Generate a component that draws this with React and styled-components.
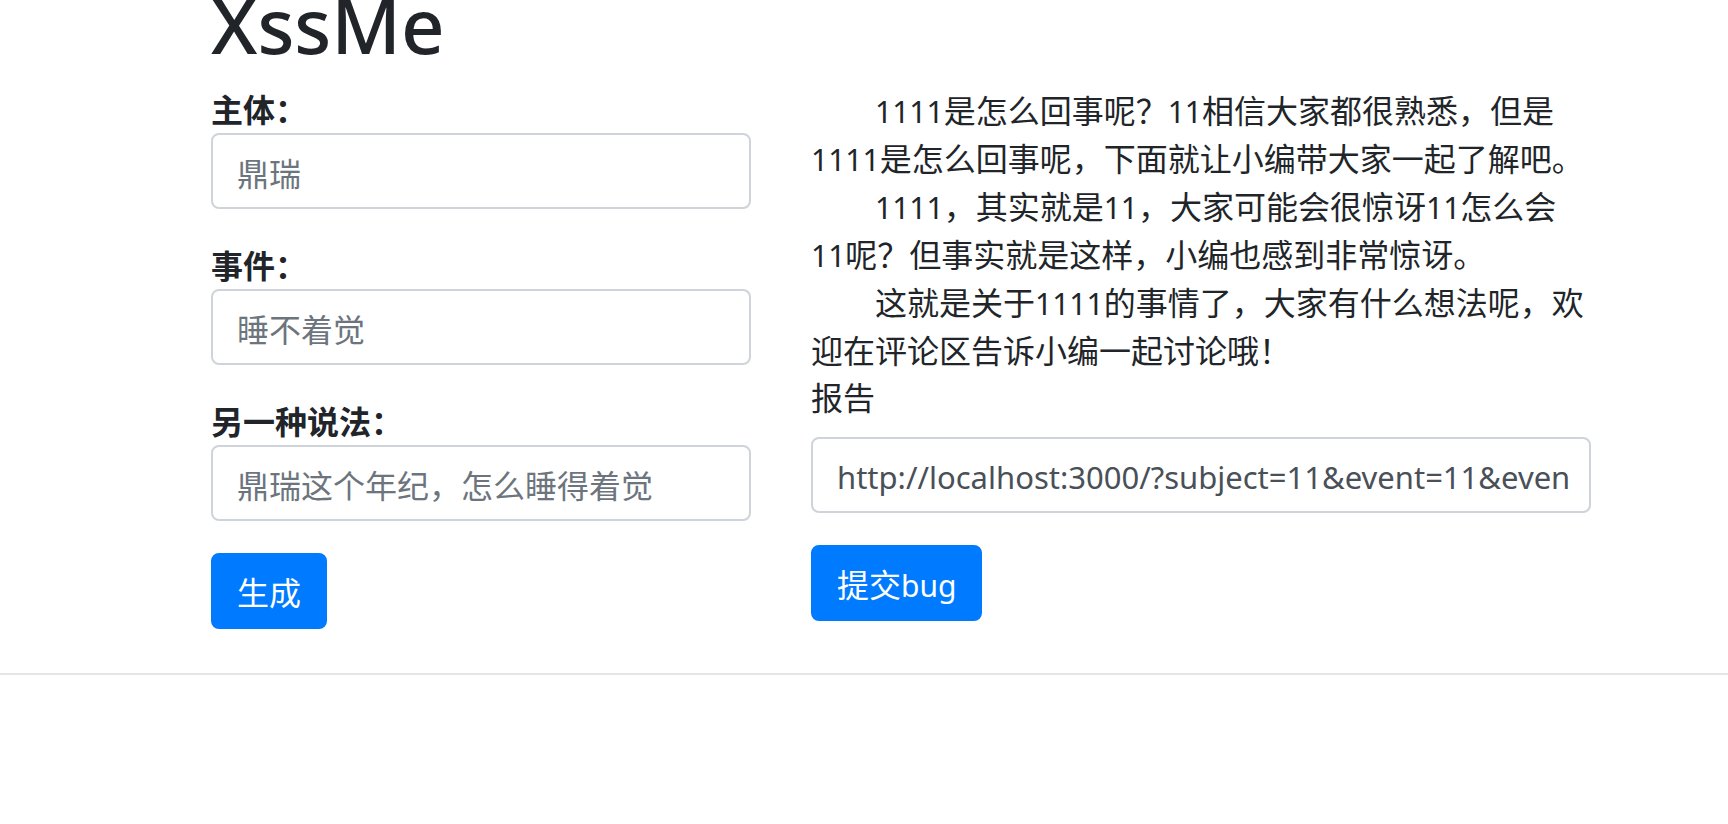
import React from "react";
import styled, { createGlobalStyle } from "styled-components";

const GlobalStyle = createGlobalStyle`
  *, *::before, *::after { box-sizing: border-box; }
  body {
    margin: 0;
    background: #fff;
    color: #212529;
    font-family: "Noto Sans", "Noto Sans CJK SC", sans-serif;
    font-size: 32px;
    line-height: 48px;
    overflow-x: hidden;
  }
`;

const Page = styled.main`
  display: flow-root;
`;

const Container = styled.div`
  padding: 0 137px 0 211px;
`;

const Title = styled.h1`
  margin: -23px 0 12px;
  font-size: 76px;
  font-weight: 500;
  line-height: 96px;
`;

const Columns = styled.div`
  display: grid;
  grid-template-columns: minmax(0, 9fr) minmax(0, 13fr);
  column-gap: 60px;
  align-items: start;
`;

const Form = styled.form`
  display: flex;
  flex-direction: column;
  align-items: flex-start;
`;

const Field = styled.div`
  display: flex;
  flex-direction: column;
  gap: ${(p) => p.$gap || 0}px;
  width: 100%;
  margin-bottom: 32px;
`;

const Label = styled.label`
  padding-top: 2px;
  font-weight: ${(p) => (p.$bold ? 700 : 400)};
  line-height: 46px;
`;

const TextInput = styled.input`
  width: 100%;
  height: 76px;
  padding: 14px 16px 10px 24px;
  border: 2px solid #ced4da;
  border-radius: 8px;
  background: #fff;
  color: #495057;
  font-family: inherit;
  font-size: ${(p) => (p.$latin ? 31 : 32)}px;
  line-height: 48px;
  outline: none;

  &::placeholder {
    color: #6c757d;
    opacity: 1;
  }
`;

const Button = styled.button`
  height: 76px;
  padding: 14px 24px 10px;
  border: 2px solid #007bff;
  border-radius: 8px;
  background: #007bff;
  color: #fff;
  font-family: inherit;
  font-size: 32px;
  line-height: 48px;
  cursor: pointer;
`;

const Paragraph = styled.p`
  margin: 0;
  padding-top: 2px;
  margin-bottom: -2px;
  text-indent: 64px;
`;

const Latin = styled.span`
  font-size: 30px;
  line-height: 1;
`;

const NoBreak = styled.span`
  white-space: nowrap;
`;

const Divider = styled.hr`
  margin: 44px 0 32px;
  border: 0;
  border-top: 2px solid #e5e5e5;
`;

const fields = [
  { id: "subject", label: "主体：", placeholder: "鼎瑞" },
  { id: "event", label: "事件：", placeholder: "睡不着觉" },
  { id: "event2", label: "另一种说法：", placeholder: "鼎瑞这个年纪，怎么睡得着觉" },
];

const stop = (e) => e.preventDefault();

export default function App() {
  return (
    <Page>
      <GlobalStyle />
      <Container>
        <Title>XssMe</Title>
        <Columns>
          <Form onSubmit={stop}>
            {fields.map((f) => (
              <Field key={f.id}>
                <Label $bold htmlFor={f.id}>{f.label}</Label>
                <TextInput id={f.id} name={f.id} placeholder={f.placeholder} />
              </Field>
            ))}
            <Button type="submit">生成</Button>
          </Form>
          <section>
            <Paragraph>
              <Latin>1111</Latin>是怎么回事呢？<Latin>11</Latin>相信大家都很熟悉，但是<Latin>1111</Latin>是怎么回事呢，下面就让小编带大家一起了解吧。
            </Paragraph>
            <Paragraph>
              <Latin>1111</Latin>，其实就是<Latin>11</Latin>，大家可能会很惊讶<Latin>11</Latin>怎么会<NoBreak><Latin>11</Latin>呢？</NoBreak>但事实就是这样，小编也感到非常惊讶。
            </Paragraph>
            <Paragraph>
              这就是关于<Latin>1111</Latin>的事情了，大家有什么想法呢，欢迎在评论区告诉小编一起讨论哦！
            </Paragraph>
            <Form onSubmit={stop}>
              <Field $gap={16}>
                <Label htmlFor="url">报告</Label>
                <TextInput
                  $latin
                  id="url"
                  name="url"
                  defaultValue="http://localhost:3000/?subject=11&event=11&even"
                />
              </Field>
              <Button type="submit">提交<Latin>bug</Latin></Button>
            </Form>
          </section>
        </Columns>
      </Container>
      <Divider />
    </Page>
  );
}
